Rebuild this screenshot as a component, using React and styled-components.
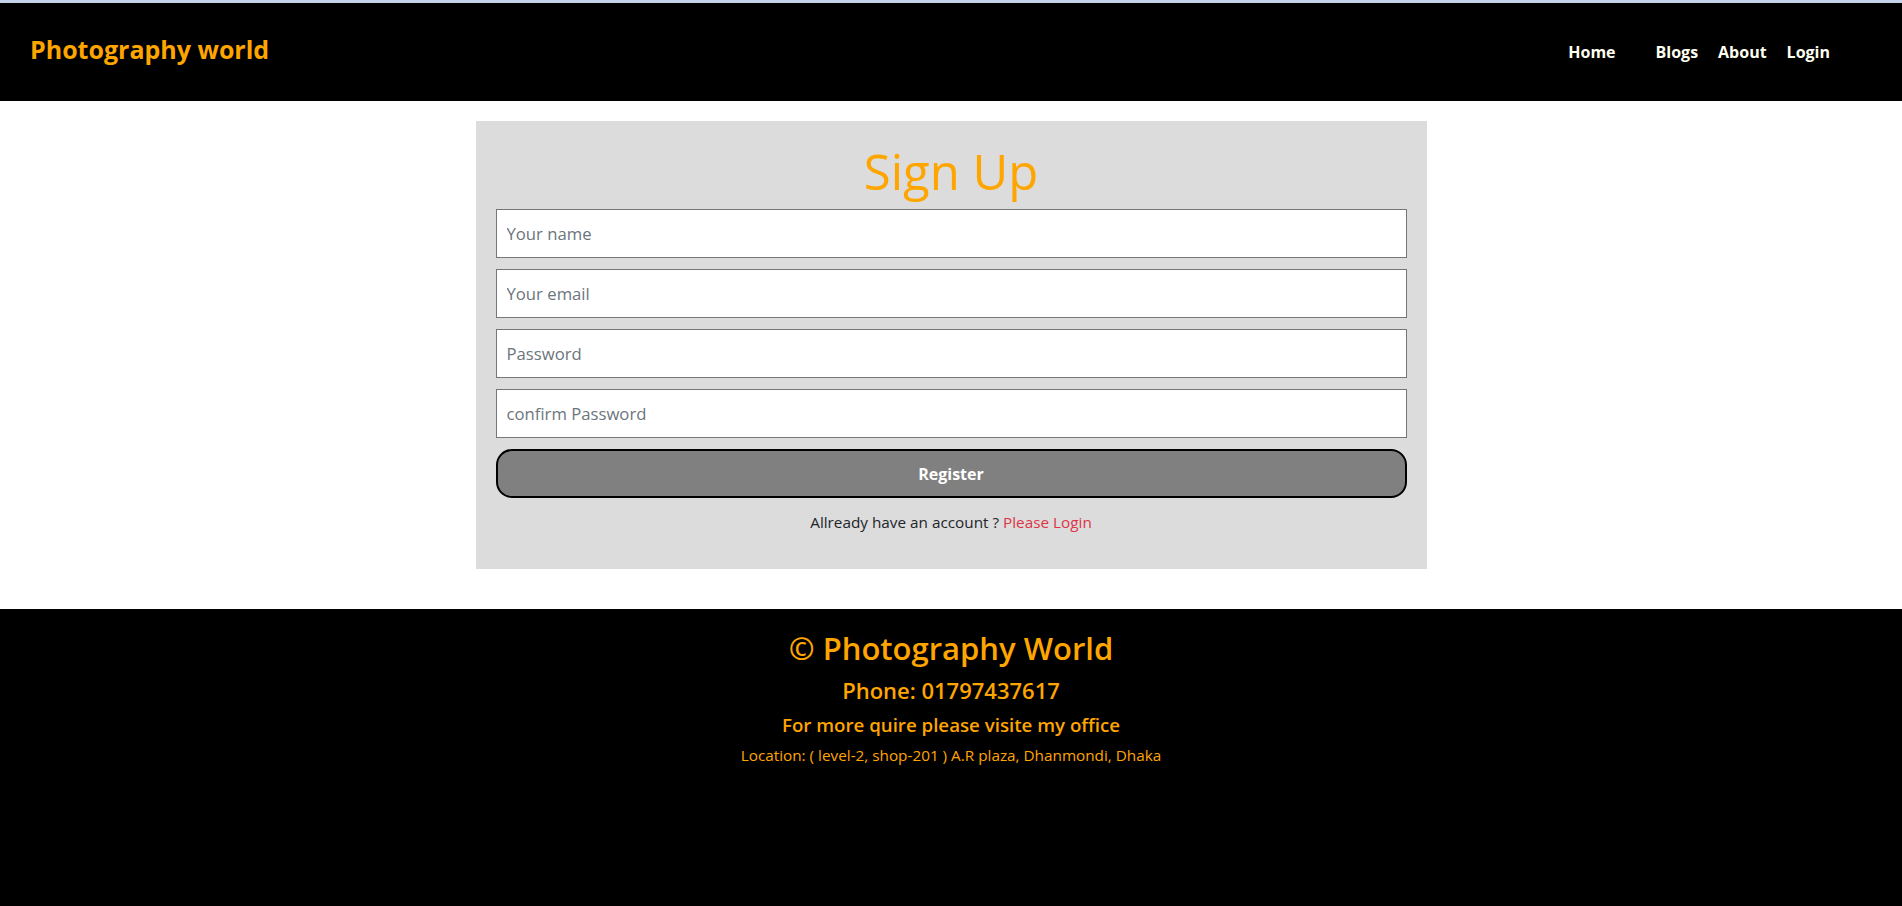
import React from 'react';
import styled, { createGlobalStyle } from 'styled-components';

const GlobalStyle = createGlobalStyle`
    * {
        box-sizing: border-box;
    }
    body {
        margin: 0;
        border-top: 3px solid #c3d3ea;
        font-family: "Open Sans", "Noto Sans", sans-serif;
        color: #212529;
        background: #fff;
    }
`;

const Page = styled.div`
    min-height: calc(100vh - 3px);
    display: flex;
    flex-direction: column;
`;

const Header = styled.header`
    height: 98px;
    background: #000;
    display: flex;
    align-items: center;
    justify-content: space-between;
    padding: 0 72px 0 30px;
`;

const Logo = styled.a`
    color: orange;
    font-size: 25px;
    font-weight: 700;
    text-decoration: none;
    padding-bottom: 7px;
`;

const Nav = styled.nav`
    display: flex;
    gap: 20px;
`;

const NavLink = styled.a`
    color: ivory;
    font-size: 16px;
    font-weight: 700;
    text-decoration: none;
    margin-right: ${p => (p.$wide ? '20px' : '0')};
`;

const Main = styled.main`
    padding: 20px 0 40px;
`;

const Card = styled.form`
    width: 50%;
    margin: 0 auto;
    background: #dcdcdc;
    padding: 22px 20px 20px;
    display: flex;
    flex-direction: column;
`;

const Title = styled.h1`
    margin: 0 0 10px;
    text-align: center;
    color: orange;
    font-size: 49px;
    font-weight: 500;
    line-height: 56px;
`;

const Input = styled.input`
    height: 49px;
    margin-bottom: 11px;
    border: 1px solid #767676;
    background: #fff;
    padding: 0 10px;
    font-family: inherit;
    font-size: 16.7px;

    &::placeholder {
        color: #6c757d;
    }
`;

const Button = styled.button`
    height: 49px;
    border: 2px solid #000;
    border-radius: 16px;
    background: #808080;
    color: #fff;
    font-family: inherit;
    font-size: 16px;
    font-weight: 700;
`;

const Note = styled.p`
    margin: 12px 0 15px;
    text-align: center;
    font-size: 15.3px;
    line-height: 24px;
`;

const LoginLink = styled.a`
    color: #dc3545;
    text-decoration: none;
`;

const Footer = styled.footer`
    flex: 1;
    background: #000;
    color: orange;
    text-align: center;
    padding-top: 21px;
`;

const FooterLine = styled.div`
    font-size: ${p => p.$size}px;
    font-weight: ${p => p.$weight};
    line-height: 1.2;
    margin-bottom: 10px;
`;

const App = () => (
    <Page>
        <GlobalStyle />
        <Header>
            <Logo href="#">Photography world</Logo>
            <Nav>
                <NavLink href="#" $wide>Home</NavLink>
                <NavLink href="#">Blogs</NavLink>
                <NavLink href="#">About</NavLink>
                <NavLink href="#">Login</NavLink>
            </Nav>
        </Header>
        <Main>
            <Card onSubmit={e => e.preventDefault()}>
                <Title>Sign Up</Title>
                <Input type="text" placeholder="Your name" />
                <Input type="email" placeholder="Your email" />
                <Input type="password" placeholder="Password" />
                <Input type="password" placeholder="confirm Password" />
                <Button type="submit">Register</Button>
                <Note>
                    Allready have an account ? <LoginLink href="#">Please Login</LoginLink>
                </Note>
            </Card>
        </Main>
        <Footer>
            <FooterLine $size={31} $weight={600}>© Photography World</FooterLine>
            <FooterLine $size={22} $weight={600}>Phone: 01797437617</FooterLine>
            <FooterLine $size={18.7} $weight={600}>For more quire please visite my office</FooterLine>
            <FooterLine $size={15.3} $weight={400}>Location: ( level-2, shop-201 ) A.R plaza, Dhanmondi, Dhaka</FooterLine>
        </Footer>
    </Page>
);

export default App;
